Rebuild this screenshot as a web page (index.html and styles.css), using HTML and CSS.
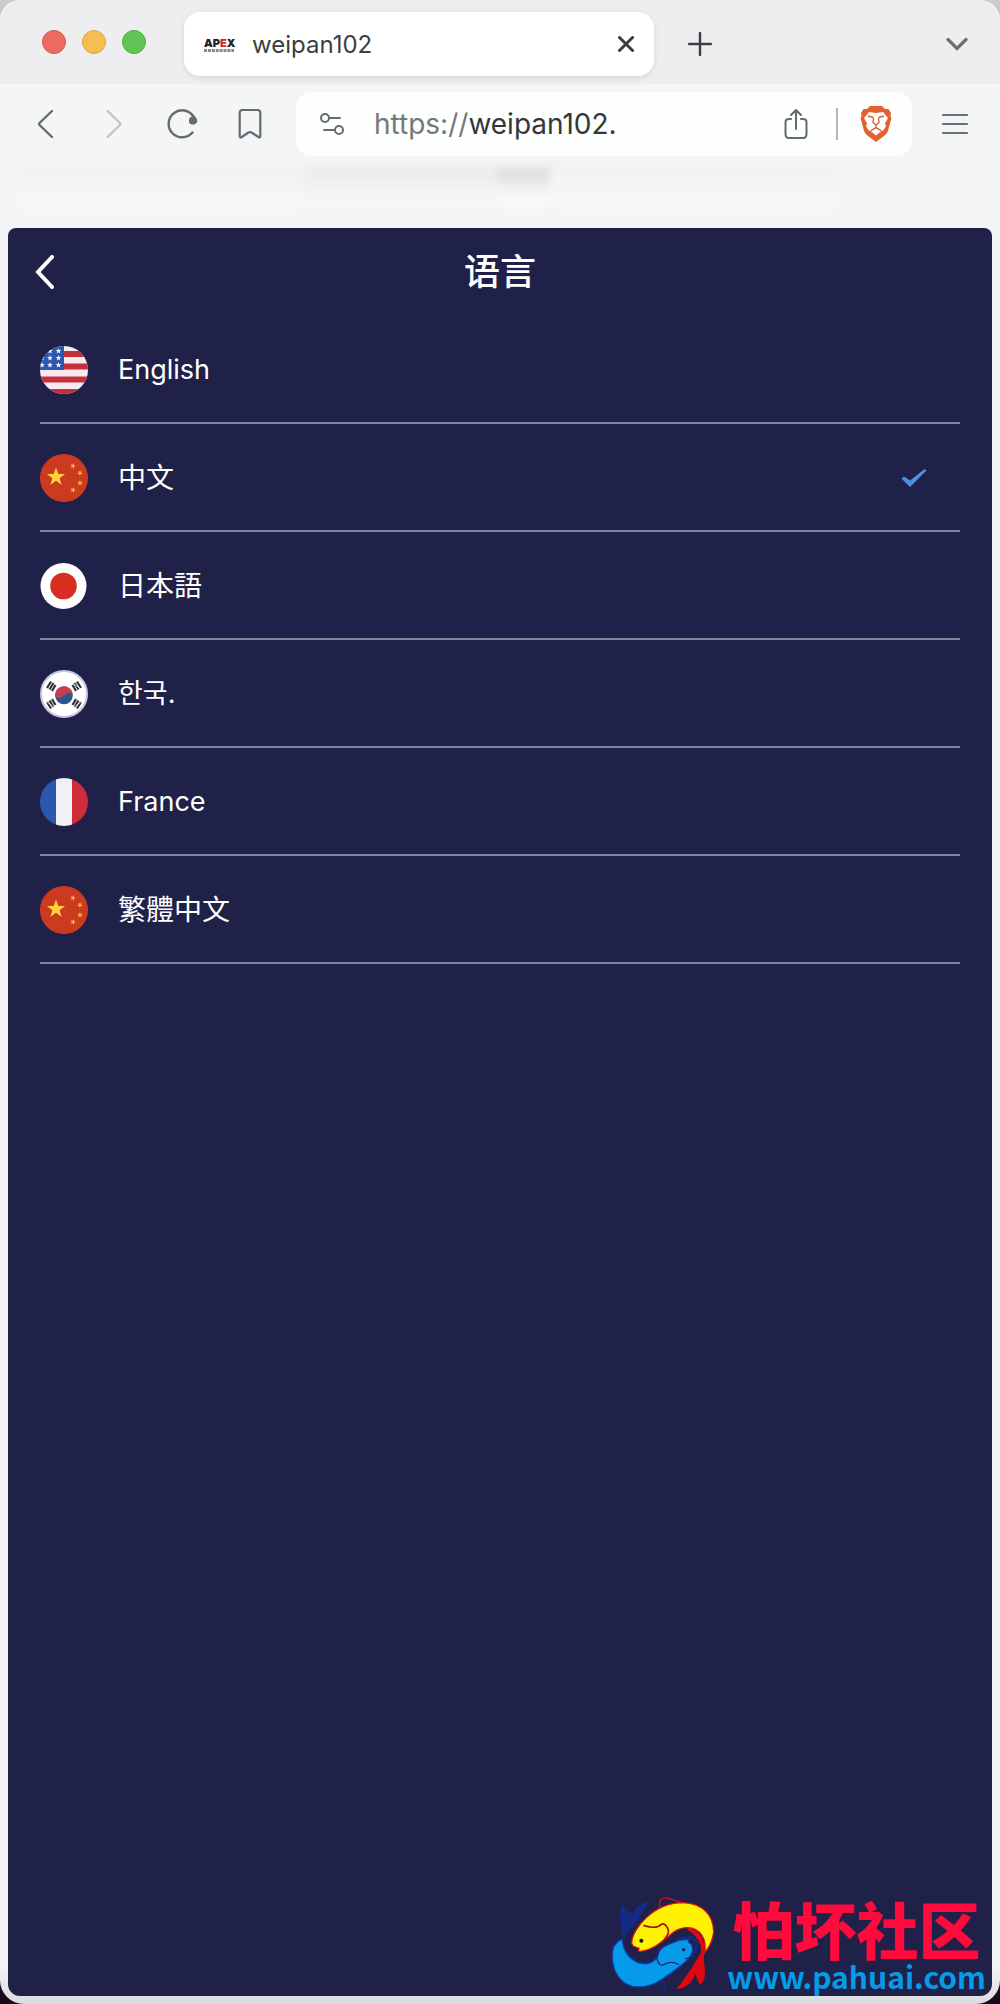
FILE: index.html
```html
<!DOCTYPE html>
<html lang="zh-CN">
<head>
    <meta charset="UTF-8">
    <meta name="viewport" content="width=device-width, initial-scale=1.0">
    <title>weipan102</title>
    <link rel="stylesheet" href="styles.css">
</head>
<body>
    <div class="window">
        <div class="tab-strip">
            <div class="lights">
                <span class="light red"></span>
                <span class="light yellow"></span>
                <span class="light green"></span>
            </div>
            <div class="tab">
                <span class="favicon">
                    <span class="favicon-text">AP<em>E</em>X</span>
                    <svg width="30" height="3" viewBox="0 0 30 3" aria-hidden="true"><path d="M0 1.500H30" stroke="#888" stroke-width="3" stroke-dasharray="3 0.900"/></svg>
                </span>
                <span class="tab-title">weipan102</span>
                <button class="icon-btn" aria-label="Close tab">
                    <svg width="16" height="16" viewBox="0 0 16 16"><path d="M1.500 1.500L14.500 14.500M14.500 1.500L1.500 14.500" stroke="#3b3e40" stroke-width="3" stroke-linecap="round"/></svg>
                </button>
            </div>
            <button class="icon-btn new-tab" aria-label="New tab">
                <svg width="24" height="24" viewBox="0 0 24 24"><path d="M12 1V23M1 12H23" stroke="#3b3e40" stroke-width="2.400" stroke-linecap="round"/></svg>
            </button>
            <button class="icon-btn tab-menu" aria-label="Search tabs">
                <svg width="22" height="14" viewBox="0 0 22 14"><path d="M2 2.500L11 11.500L20 2.500" fill="none" stroke="#6b7073" stroke-width="3.200" stroke-linecap="round"/></svg>
            </button>
        </div>

        <div class="toolbar">
            <div class="nav">
                <button class="icon-btn" aria-label="Back">
                    <svg width="32" height="32" viewBox="0 0 32 32"><path d="M22 3L9.500 15Q8.500 16 9.500 17L22 29" fill="none" stroke="#666b6e" stroke-width="2.400" stroke-linecap="round"/></svg>
                </button>
                <button class="icon-btn" aria-label="Forward" disabled>
                    <svg width="32" height="32" viewBox="0 0 32 32"><path d="M9.500 3L22 15Q23 16 22 17L9.500 29" fill="none" stroke="#c3c5c7" stroke-width="2.400" stroke-linecap="round"/></svg>
                </button>
                <button class="icon-btn" aria-label="Reload">
                    <svg width="32" height="32" viewBox="0 0 32 32"><path d="M26.500 24.500A13.500 13.500 0 1 1 27.500 8.500" fill="none" stroke="#666b6e" stroke-width="2.400" stroke-linecap="round"/><path d="M28 7L31.500 13.500Q27 18 24 15.500Q21 12 28 7Z" fill="#666b6e"/><circle cx="27" cy="12.500" r="4" fill="#666b6e"/></svg>
                </button>
                <button class="icon-btn" aria-label="Bookmark">
                    <svg width="32" height="32" viewBox="0 0 32 32"><path d="M8.500 2H23.500Q26.300 2 26.300 5V28Q26.300 30.300 24.500 29L17.500 24.500Q16 23.500 14.500 24.500L7.800 29Q5.700 30.300 5.700 28V5Q5.700 2 8.500 2Z" fill="none" stroke="#666b6e" stroke-width="2.200"/></svg>
                </button>
            </div>
            <div class="address">
                <svg width="24" height="24" viewBox="0 0 24 24" fill="none" stroke="#666b6e" stroke-width="2" stroke-linecap="round"><circle cx="5" cy="6" r="4"/><path d="M10 6H20"/><circle cx="19" cy="18" r="4"/><path d="M4 18H14"/></svg>
                <label class="url">
                    <span class="scheme">https://</span>
                    <input type="text" class="url-input" value="weipan102." aria-label="Address">
                </label>
                <button class="icon-btn" aria-label="Share">
                    <svg width="24" height="32" viewBox="0 0 24 32" fill="none" stroke="#666b6e" stroke-width="2" stroke-linecap="round" stroke-linejoin="round"><path d="M12 21V2M7 7L12 2L17 7M7 11H5Q1.500 11 1.500 14V26Q1.500 30 5 30H19Q22.500 30 22.500 26V14Q22.500 11 19 11H17"/></svg>
                </button>
                <span class="divider"></span>
                <button class="icon-btn" aria-label="Shields">
                    <svg width="32" height="36" viewBox="0 0 32 36">
                        <path d="M10 0H22L25 3L28.500 3L31 7L30.500 10L31.500 12L28 25Q27 28 24 30L16 36L8 30Q5 28 4 25L0.500 12L1.500 10L1 7L3.500 3H7Z" fill="#e5602f"/>
                        <path d="M9 6L16 7L23 6L28 12L25 17.500L26 20L23 25L16 22L9 25L6 20L7 17.500L4 12Z" fill="#fff"/>
                        <path d="M10.500 25L16 22.500L21.500 25L16 29.500Z" fill="#fff"/>
                        <path d="M8 10L13.500 11.500M24 10L18.500 11.500M13.500 12L13 16.500L16 19L19 16.500L18.500 12M16 19V22M11 24.500L16 21.500L21 24.500" fill="none" stroke="#d25a2e" stroke-width="1.300"/>
                    </svg>
                </button>
            </div>
            <button class="icon-btn menu-btn" aria-label="Menu">
                <svg width="26" height="22" viewBox="0 0 26 22"><path d="M1 2H25M1 11H25M1 20H25" stroke="#6b7073" stroke-width="2.200" stroke-linecap="round"/></svg>
            </button>
        </div>

        <!-- bookmarks row, blurred out -->
        <div class="bookmarks">
            <span class="smudge faint"></span>
            <span class="smudge mid"></span>
            <span class="smudge dark"></span>
            <span class="smudge faint"></span>
        </div>

        <main class="app">
            <header class="app-header">
                <button class="icon-btn back" aria-label="返回">
                    <svg width="20" height="34" viewBox="0 0 20 34"><path d="M18 2L4 17L18 32" fill="none" stroke="#fff" stroke-width="4" stroke-linecap="round"/></svg>
                </button>
                <h1>语言</h1>
            </header>
            <ul class="languages">
                <li>
                    <button class="language">
                        <svg class="flag" viewBox="0 0 48 48">
                            <defs>
                                <clipPath id="round"><circle cx="24" cy="24" r="24"/></clipPath>
                                <path id="star" d="M0 -10L2.400 -3.200L9.500 -3.100L3.800 1.200L5.900 8.100L0 4L-5.900 8.100L-3.800 1.200L-9.500 -3.100L-2.400 -3.200Z"/>
                            </defs>
                            <g clip-path="url(#round)">
                                <rect width="48" height="48" fill="#f8eaf0"/>
                                <path d="M0 8H48M0 20.500H48M0 33.500H48M0 46H48" stroke="#c32f3b" stroke-width="6"/>
                                <rect width="24" height="24" fill="#2b57ae"/>
                                <g fill="#fff">
                                    <use href="#star" transform="translate(10 5) scale(.3)"/>
                                    <use href="#star" transform="translate(18.500 5) scale(.3)"/>
                                    <use href="#star" transform="translate(2 12) scale(.3)"/>
                                    <use href="#star" transform="translate(10 12) scale(.3)"/>
                                    <use href="#star" transform="translate(18.500 12) scale(.3)"/>
                                    <use href="#star" transform="translate(2 19) scale(.3)"/>
                                    <use href="#star" transform="translate(10 19) scale(.3)"/>
                                    <use href="#star" transform="translate(18.500 19) scale(.3)"/>
                                </g>
                            </g>
                        </svg>
                        <span class="name latin" lang="en">English</span>
                    </button>
                </li>
                <li>
                    <button class="language" aria-pressed="true">
                        <svg class="flag" viewBox="0 0 48 48">
                            <g id="china">
                                <circle cx="24" cy="24" r="24" fill="#cc3a20"/>
                                <use href="#star" fill="#ffd43b" transform="translate(16 23) scale(.95)"/>
                                <g fill="#f6b73c">
                                    <use href="#star" transform="translate(33 12) rotate(20) scale(.3)"/>
                                    <use href="#star" transform="translate(40 19) rotate(40) scale(.3)"/>
                                    <use href="#star" transform="translate(40 29) scale(.3)"/>
                                    <use href="#star" transform="translate(33 36) rotate(20) scale(.3)"/>
                                </g>
                            </g>
                        </svg>
                        <span class="name">中文</span>
                        <svg class="check" viewBox="0 0 26 20"><path d="M0.500 10.500L3 8.500L9 12.500L23.500 1L25.500 2.500L9 19Z" fill="#4f90dc"/></svg>
                    </button>
                </li>
                <li>
                    <button class="language">
                        <svg class="flag" viewBox="0 0 48 48"><circle cx="23.500" cy="24" r="23" fill="#fff"/><circle cx="23.500" cy="24" r="13.300" fill="#d82e20"/></svg>
                        <span class="name" lang="ja">日本語</span>
                    </button>
                </li>
                <li>
                    <button class="language">
                        <svg class="flag" viewBox="0 0 48 48">
                            <circle cx="24" cy="24" r="23" fill="#fff" stroke="#c9c6e4" stroke-width="2"/>
                            <circle cx="24" cy="25.500" r="8.800" fill="#2d5592"/>
                            <path d="M15.400 27A8.800 8.800 0 1 1 32.700 24Q28 21 24 25.500Q20 29 15.400 27Z" fill="#c4404d"/>
                            <g stroke="#333" stroke-width="2.200">
                                <path id="bars" d="M7 18L11 11.500M9.500 19.500L13.500 13M12 21L15.500 15"/>
                                <use href="#bars" transform="matrix(-1 0 0 1 48 0)"/>
                                <use href="#bars" transform="matrix(1 0 0 -1 0 50)"/>
                                <use href="#bars" transform="matrix(-1 0 0 -1 48 50)"/>
                            </g>
                            <path d="M41 19L34 14M7 32L14 37M41 32L34 37" stroke="#fff" stroke-width="0.700"/>
                        </svg>
                        <span class="name" lang="ko">한국.</span>
                    </button>
                </li>
                <li>
                    <button class="language">
                        <svg class="flag" viewBox="0 0 48 48">
                            <g clip-path="url(#round)">
                                <rect width="16" height="48" fill="#2b57ae"/>
                                <rect x="16" width="16" height="48" fill="#f0f1f5"/>
                                <rect x="32" width="16" height="48" fill="#ce2d39"/>
                            </g>
                        </svg>
                        <span class="name latin" lang="fr">France</span>
                    </button>
                </li>
                <li>
                    <button class="language">
                        <svg class="flag" viewBox="0 0 48 48"><use href="#china"/></svg>
                        <span class="name" lang="zh-TW">繁體中文</span>
                    </button>
                </li>
            </ul>
        </main>

        <div class="watermark">
            <svg class="fish" viewBox="50 40 330 300" aria-hidden="true">
                <path d="M92 168C82 130 80 100 90 70C96 88 108 95 120 100C130 80 148 66 175 62C152 80 150 112 122 135C108 150 98 160 97 172Z" fill="#142a86"/>
                <path d="M90 172C86 215 120 252 165 248C215 240 220 180 280 170C320 165 320 200 298 225C275 250 240 275 215 292" fill="none" stroke="#142a86" stroke-width="7"/>
                <path d="M60 220C60 195 75 180 90 175C92 218 122 252 165 249C185 245 198 230 200 213C212 190 245 188 262 178L290 176L288 184C303 192 304 208 297 220C290 242 250 266 215 292C185 315 150 322 120 317C85 308 58 275 60 220Z" fill="#069be8" stroke="#1438a0" stroke-width="4"/>
                <path d="M200 210C186 235 200 258 214 252C230 243 245 243 260 252M278 234L296 231M200 300C220 300 224 325 210 330" fill="none" stroke="#142a86" stroke-width="4"/>
                <circle cx="274" cy="207" r="5" fill="#111c50"/>
                <path d="M202 85C198 55 208 47 232 54L268 66" fill="none" stroke="#d4101c" stroke-width="4"/>
                <path d="M285 140C312 142 340 175 338 212C328 240 346 275 333 302L322 314L309 280C300 305 282 323 252 325C282 290 310 245 326 215C330 188 310 160 285 148Z" fill="#e30613"/>
                <path d="M118 188C118 145 185 66 270 66C338 68 364 110 364 155C360 182 350 202 337 216C344 178 326 142 285 141C250 140 235 165 210 182C190 198 162 214 138 212L140 203L122 196Z" fill="#fff200" stroke="#d4101c" stroke-width="4"/>
                <path d="M153 134C176 141 198 141 206 132C217 124 230 142 228 157C224 170 214 176 210 186" fill="none" stroke="#a40e1a" stroke-width="5"/>
                <circle cx="147" cy="180" r="6" fill="#111"/>
            </svg>
            <div class="watermark-text">
                <strong>怕坏社区</strong>
                <span>www.pahuai.com</span>
            </div>
        </div>
    </div>
</body>
</html>
```

FILE: styles.css
```css
* { margin: 0; padding: 0; box-sizing: border-box; }
body {
    font-family: Inter, "Noto Sans CJK SC", sans-serif;
    background: linear-gradient(#cfc8c8 0%, #cfc8c8 50%, #1b0a1c 50%, #1b0a1c 100%);
    min-height: 100vh;
}
button, input { font: inherit; color: inherit; border: none; background: none; }
.window {
    position: relative;
    display: flex;
    flex-direction: column;
    min-height: 100vh;
    padding-bottom: 8px;
    background: linear-gradient(#f3f5f7 0%, #f3f4f6 98%, #dcdce0 100%);
    border-radius: 20px 20px 24px 24px;
    overflow: hidden;
}
.icon-btn { display: flex; align-items: center; justify-content: center; cursor: pointer; }

/* tabs */
.tab-strip {
    display: flex;
    align-items: center;
    height: 84px;
    padding: 4px 32px 0 42px;
    background: #eeeef0;
}
.lights { display: flex; gap: 16px; width: 142px; }
.light { width: 24px; height: 24px; border-radius: 50%; margin-bottom: 4px; }
.red { background: #ec6a5f; border: 1px solid #d4594f; }
.yellow { background: #f4bf50; border: 1px solid #dda640; }
.green { background: #61c455; border: 1px solid #50ac45; }
.tab {
    display: flex;
    align-items: center;
    flex: 0 1 470px;
    height: 64px;
    padding: 0 20px;
    background: #fff;
    border-radius: 16px;
    box-shadow: 0 2px 6px rgba(0, 0, 0, 0.1);
}
.favicon { display: flex; flex-direction: column; width: 32px; }
.favicon-text { font-size: 11px; font-weight: 900; line-height: 12px; color: #222; }
.favicon-text em { font-style: normal; color: #d8282c; }
.tab-title { flex: 1; margin-left: 16px; font-size: 24px; color: #3b3e40; }
.new-tab { margin-left: 34px; }
.tab-menu { margin-left: auto; }

/* toolbar */
.toolbar {
    display: flex;
    align-items: center;
    height: 80px;
    padding: 0 32px 0 30px;
}
.nav { display: flex; gap: 36px; margin-right: 30px; }
.address {
    display: flex;
    align-items: center;
    flex: 1;
    min-width: 0;
    height: 64px;
    padding: 0 20px 0 24px;
    background: #fdfefe;
    border-radius: 16px;
}
.url { display: flex; flex: 1; min-width: 0; margin-left: 30px; font-size: 28px; }
.scheme { color: #73777a; }
.url-input { flex: 1; min-width: 0; color: #33373a; outline: none; }
.divider { width: 2px; height: 32px; margin: 0 22px 0 28px; background: #b4b6b8; }
.menu-btn { margin-left: 30px; }

.bookmarks {
    display: flex;
    height: 64px;
    padding: 4px 160px 20px 16px;
}
.smudge { filter: blur(4px); }
.smudge.faint { flex: 3; background: linear-gradient(#f0f1f3, #f9f9fa); }
.smudge.mid { flex: 2; background: linear-gradient(#e8e9eb, #f6f6f7 70%); }
.smudge.dark { flex: 0 0 56px; background: linear-gradient(#d8d9db, #f9f9fa 70%); }

/* language page */
.app {
    flex: 1;
    margin: 0 8px;
    background: #202148;
    border-radius: 8px 8px 12px 12px;
    color: #fff;
}
.app-header {
    display: grid;
    grid-template-columns: 1fr auto 1fr;
    align-items: center;
    height: 88px;
    padding: 0 26px;
}
.back { justify-self: start; }
h1 { font-size: 36px; font-weight: 500; line-height: 44px; }
.languages { list-style: none; padding: 0 32px; }
.language {
    display: flex;
    align-items: center;
    width: 100%;
    height: 108px;
    padding-top: 2px;
    border-bottom: 2px solid #84849c;
    text-align: left;
    cursor: pointer;
}
.flag { width: 48px; height: 48px; }
.name { flex: 1; margin-left: 30px; font-size: 28px; line-height: 40px; }
.name.latin { font-size: 27px; }
.name:lang(ja) { font-family: Inter, "Noto Sans CJK JP", sans-serif; }
.name:lang(ko) { font-family: Inter, "Noto Sans CJK KR", sans-serif; font-size: 27px; }
.name:lang(zh-TW) { font-family: Inter, "Noto Sans CJK TC", sans-serif; }
.check { width: 26px; height: 20px; margin-right: 33px; }

/* site stamp over the page corner */
.watermark {
    position: absolute;
    right: 14px;
    bottom: 10px;
    display: flex;
    align-items: center;
    gap: 8px;
}
.fish { width: 110px; height: 100px; }
.watermark-text { display: flex; flex-direction: column; align-items: center; font-family: "Noto Sans CJK SC", sans-serif; }
.watermark-text strong { font-size: 62px; font-weight: 900; line-height: 64px; color: #ff0a3c; }
.watermark-text span { font-size: 30px; font-weight: 700; line-height: 32px; color: #069be8; }
```
